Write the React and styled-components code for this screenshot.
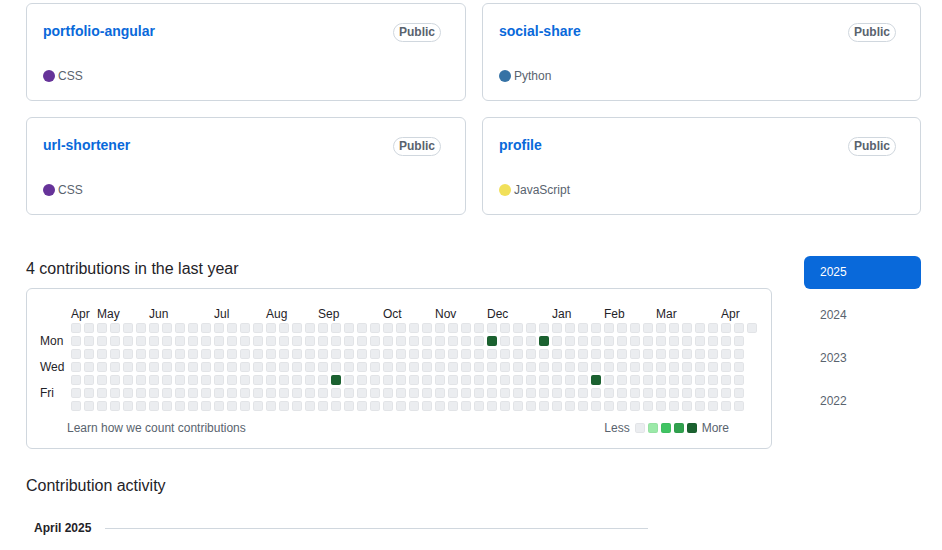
import React from 'react';
import styled, { createGlobalStyle } from 'styled-components';

const GlobalStyle = createGlobalStyle`
  body {
    margin: 0;
    background: #ffffff;
    font-family: "Liberation Sans", Arial, sans-serif;
    color: #1f2328;
  }
`;

const repos = [
    { name: 'portfolio-angular', lang: 'CSS', color: '#663399' },
    { name: 'social-share', lang: 'Python', color: '#3572a5' },
    { name: 'url-shortener', lang: 'CSS', color: '#663399' },
    { name: 'profile', lang: 'JavaScript', color: '#f1e05a' },
];

const months = [
    ['Apr', 0], ['May', 2], ['Jun', 6], ['Jul', 11], ['Aug', 15], ['Sep', 19], ['Oct', 24],
    ['Nov', 28], ['Dec', 32], ['Jan', 37], ['Feb', 41], ['Mar', 45], ['Apr', 50],
];

const contributions = { '20-4': 4, '32-1': 4, '36-1': 4, '40-4': 4 };

const days = [];
for (let w = 0; w < 53; w++) {
    const count = w === 52 ? 1 : 7;
    for (let d = 0; d < count; d++) {
        days.push({ key: `${w}-${d}`, level: contributions[`${w}-${d}`] || 0 });
    }
}

const levelColors = ['#ebedf0', '#9be9a8', '#40c463', '#30a14e', '#1b6230'];

const years = ['2025', '2024', '2023', '2022'];

const App = () => {
    return (
        <>
            <GlobalStyle />
            <Page>
                <PinnedGrid>
                    {repos.map((repo) => (
                        <RepoCard key={repo.name}>
                            <CardHeader>
                                <RepoName>{repo.name}</RepoName>
                                <Badge>Public</Badge>
                            </CardHeader>
                            <LangRow>
                                <LangDot $color={repo.color} />
                                <span>{repo.lang}</span>
                            </LangRow>
                        </RepoCard>
                    ))}
                </PinnedGrid>

                <GraphLayout>
                    <GraphColumn>
                        <GraphTitle>4 contributions in the last year</GraphTitle>
                        <GraphBox>
                            <MonthRow>
                                {months.map(([label, col]) => (
                                    <MonthLabel key={label + col} $col={col}>{label}</MonthLabel>
                                ))}
                            </MonthRow>
                            <CalendarBody>
                                <DayLabels>
                                    <DayLabel $row={2}>Mon</DayLabel>
                                    <DayLabel $row={4}>Wed</DayLabel>
                                    <DayLabel $row={6}>Fri</DayLabel>
                                </DayLabels>
                                <CellGrid>
                                    {days.map((c) => (
                                        <Cell key={c.key} $level={c.level} />
                                    ))}
                                </CellGrid>
                            </CalendarBody>
                            <GraphFooter>
                                <LearnLink>Learn how we count contributions</LearnLink>
                                <Legend>
                                    <LegendText>Less</LegendText>
                                    {levelColors.map((col, i) => (
                                        <Cell key={col} $level={i} />
                                    ))}
                                    <LegendText>More</LegendText>
                                </Legend>
                            </GraphFooter>
                        </GraphBox>

                        <ActivityTitle>Contribution activity</ActivityTitle>
                        <MonthHeading>
                            <MonthName>April 2025</MonthName>
                            <Divider />
                        </MonthHeading>
                    </GraphColumn>

                    <YearList>
                        {years.map((y, i) => (
                            <YearLink key={y} $active={i === 0}>{y}</YearLink>
                        ))}
                    </YearList>
                </GraphLayout>
            </Page>
        </>
    );
};

const Page = styled.div`
  width: 895px;
  padding: 3px 21px 0 26px;
`;

const PinnedGrid = styled.div`
  display: grid;
  grid-template-columns: 440px 439px;
  column-gap: 16px;
  row-gap: 16px;
`;

const RepoCard = styled.div`
  box-sizing: border-box;
  height: 98px;
  padding: 17px 16px 15px;
  border: 1px solid #d0d7de;
  border-radius: 6px;
  display: flex;
  flex-direction: column;
`;

const CardHeader = styled.div`
  display: flex;
  align-items: center;
  justify-content: space-between;
  height: 21px;
`;

const RepoName = styled.a`
  color: #0969da;
  font-size: 14px;
  font-weight: 700;
  line-height: 21px;
`;

const Badge = styled.span`
  margin-right: 8px;
  margin-top: 2px;
  padding: 0 5px;
  border: 1px solid #d0d7de;
  border-radius: 2em;
  font-size: 12px;
  font-weight: 700;
  line-height: 17px;
  color: #59636e;
`;

const LangRow = styled.div`
  margin-top: auto;
  display: flex;
  align-items: center;
  gap: 3px;
  height: 18px;
  font-size: 12px;
  color: #59636e;
`;

const LangDot = styled.span`
  width: 12px;
  height: 12px;
  border-radius: 50%;
  background: ${(p) => p.$color};
`;

const GraphLayout = styled.div`
  display: flex;
  align-items: flex-start;
  margin-top: 42px;
`;

const GraphColumn = styled.div`
  flex: 0 0 746px;
`;

const GraphTitle = styled.h2`
  margin: 0 0 7px;
  font-size: 16px;
  font-weight: 400;
  line-height: 24px;
`;

const GraphBox = styled.div`
  box-sizing: border-box;
  height: 161px;
  padding: 18px 13px 0;
  border: 1px solid #d0d7de;
  border-radius: 6px;
`;

const MonthRow = styled.div`
  display: grid;
  grid-template-columns: repeat(53, 10px);
  column-gap: 3px;
  height: 15px;
  margin: 0 0 1px 31px;
`;

const MonthLabel = styled.span`
  grid-row: 1;
  grid-column: ${(p) => p.$col + 1};
  font-size: 12px;
  line-height: 15px;
  white-space: nowrap;
`;

const CalendarBody = styled.div`
  display: flex;
`;

const DayLabels = styled.div`
  width: 31px;
  display: grid;
  grid-template-rows: repeat(7, 10px);
  row-gap: 3px;
`;

const DayLabel = styled.span`
  grid-row: ${(p) => p.$row};
  font-size: 12px;
  line-height: 10px;
  white-space: nowrap;
`;

const CellGrid = styled.div`
  display: grid;
  grid-auto-flow: column;
  grid-template-rows: repeat(7, 10px);
  grid-auto-columns: 10px;
  gap: 3px;
`;

const Cell = styled.span`
  width: 10px;
  height: 10px;
  box-sizing: border-box;
  border-radius: 2px;
  background: ${(p) => levelColors[p.$level]};
  outline: 1px solid rgba(27, 31, 35, 0.04);
  outline-offset: -1px;
`;

const GraphFooter = styled.div`
  display: flex;
  align-items: center;
  justify-content: space-between;
  margin-top: 9px;
  padding: 0 27px;
  height: 15px;
  font-size: 12px;
  color: #59636e;
`;

const LearnLink = styled.a`
  color: #59636e;
`;

const Legend = styled.div`
  display: flex;
  align-items: center;
  gap: 3px;
`;

const LegendText = styled.span`
  margin: 0 2px;
`;

const ActivityTitle = styled.h2`
  margin: 25px 0 0;
  font-size: 16px;
  font-weight: 400;
  line-height: 24px;
`;

const MonthHeading = styled.div`
  display: flex;
  align-items: center;
  margin: 21px 124px 0 8px;
  height: 18px;
`;

const MonthName = styled.h3`
  margin: 0 14px 0 0;
  font-size: 12px;
  font-weight: 700;
  line-height: 18px;
`;

const Divider = styled.div`
  flex: 1;
  height: 1px;
  background: #d0d7de;
`;

const YearList = styled.ul`
  list-style: none;
  margin: -1px 0 0 32px;
  padding: 0;
  width: 117px;
  display: flex;
  flex-direction: column;
  gap: 10px;
`;

const YearLink = styled.li`
  height: 33px;
  padding-left: 16px;
  border-radius: 6px;
  font-size: 12px;
  line-height: 33px;
  color: ${(p) => (p.$active ? '#ffffff' : '#59636e')};
  background: ${(p) => (p.$active ? '#0969da' : 'transparent')};
`;

export default App;
